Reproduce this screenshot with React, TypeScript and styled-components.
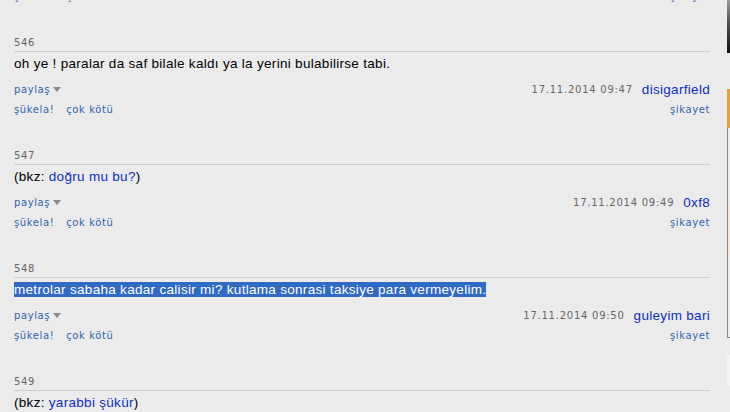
import * as React from 'react'
import styled, { createGlobalStyle } from 'styled-components'

const GlobalStyle = createGlobalStyle`
  html, body {
    margin: 0;
    padding: 0;
    background: #ebebeb;
    overflow: hidden;
  }
`

const colors = {
  bg: '#ebebeb',
  text: '#000',
  muted: '#666',
  rule: '#cdcdcd',
  link: '#0b2fc6',
  small: '#2f64b4',
  select: '#316ac5',
}

const Page = styled.div`
  display: flex;
  width: 730px;
  height: 412px;
  overflow: hidden;
  background: ${colors.bg};
`

const Main = styled.main`
  width: 696px;
  margin-left: 14px;
  flex: none;
`

const List = styled.ol`
  list-style: none;
  margin: -77px 0 0 0;
  padding: 0;
`

const Entry = styled.li`
  margin: 0 0 33px 0;
`

const Num = styled.div`
  font-family: 'DejaVu Sans', Verdana, sans-serif;
  font-size: 10px;
  line-height: 14px;
  letter-spacing: 0.6px;
  color: ${colors.muted};
  padding-bottom: 1px;
  border-bottom: 1px solid ${colors.rule};
`

const Content = styled.div`
  margin-top: 4px;
  font-family: 'Liberation Sans', Arial, sans-serif;
  font-size: 13.5px;
  letter-spacing: 0.3px;
  line-height: 16px;
  color: ${colors.text};
`

const Selected = styled.span`
  background: ${colors.select};
  color: #fff;
`

const Bkz = styled.a`
  color: ${colors.link};
  text-decoration: none;
`

const Row = styled.div<{ $top: number; $h: number }>`
  display: flex;
  align-items: center;
  justify-content: space-between;
  margin-top: ${(p) => p.$top}px;
  height: ${(p) => p.$h}px;
`

const Small = styled.a`
  font-family: 'DejaVu Sans', Verdana, sans-serif;
  font-size: 10px;
  letter-spacing: 0.6px;
  color: ${colors.small};
  text-decoration: none;
`

const Group = styled.div`
  display: flex;
  align-items: center;
  gap: 12px;
`

const Share = styled.span`
  display: inline-flex;
  align-items: center;
  gap: 3px;
`

const Caret = styled.span`
  width: 0;
  height: 0;
  border-left: 4px solid transparent;
  border-right: 4px solid transparent;
  border-top: 5px solid #8a8a8a;
  margin-top: 1px;
`

const Meta = styled.div`
  display: flex;
  align-items: center;
  gap: 9px;
`

const DateText = styled.span`
  font-family: 'DejaVu Sans', Verdana, sans-serif;
  font-size: 10px;
  letter-spacing: 0.75px;
  color: ${colors.muted};
`

const Author = styled.a`
  font-family: 'Liberation Sans', Arial, sans-serif;
  font-size: 13.5px;
  letter-spacing: 0.3px;
  color: ${colors.link};
  text-decoration: none;
`

const Side = styled.aside`
  margin-left: 17px;
  flex: 1;
  display: flex;
  flex-direction: column;
`

const SideImage = styled.div`
  height: 53px;
  background: linear-gradient(#9a9a9a, #555 40%, #111);
`

const SideBox = styled.div`
  margin-top: 36px;
  height: 248px;
  border-left: 1px solid #8a8a8a;
  border-bottom: 1px solid #8a8a8a;
  display: flex;
  flex-direction: column;
`

const Accent = styled.div`
  height: 39px;
  margin-left: -1px;
  border-left: 3px solid #f0a020;
`

const Cream = styled.div`
  margin-top: 78px;
  height: 49px;
  background: #f6e8c8;
`

const SideCard = styled.div`
  margin-top: 17px;
  height: 31px;
  background: #f4f4f4;
`

type Item = {
  id: number
  body: React.ReactNode
  date: string
  author: string
}

const items: Item[] = [
  { id: 545, body: 'gece yarisi', date: '17.11.2014 09:45', author: 'anonim' },
  {
    id: 546,
    body: 'oh ye ! paralar da saf bilale kaldı ya la yerini bulabilirse tabi.',
    date: '17.11.2014 09:47',
    author: 'disigarfield',
  },
  {
    id: 547,
    body: (
      <>
        (bkz: <Bkz href="#">doğru mu bu?</Bkz>)
      </>
    ),
    date: '17.11.2014 09:49',
    author: '0xf8',
  },
  {
    id: 548,
    body: <Selected>metrolar sabaha kadar calisir mi? kutlama sonrasi taksiye para vermeyelim.</Selected>,
    date: '17.11.2014 09:50',
    author: 'guleyim bari',
  },
  {
    id: 549,
    body: (
      <>
        (bkz: <Bkz href="#">yarabbi şükür</Bkz>)
      </>
    ),
    date: '17.11.2014 09:51',
    author: 'yorumcu',
  },
]

const App = () => {
  return (
    <Page>
      <GlobalStyle />
      <Main>
        <List>
          {items.map((it) => (
            <Entry key={it.id}>
              <Num>{it.id}</Num>
              <Content>{it.body}</Content>
              <Row $top={8} $h={18}>
                <Share>
                  <Small href="#">paylaş</Small>
                  <Caret />
                </Share>
                <Meta>
                  <DateText>{it.date}</DateText>
                  <Author href="#">{it.author}</Author>
                </Meta>
              </Row>
              <Row $top={4} $h={14}>
                <Group>
                  <Small href="#">şükela!</Small>
                  <Small href="#">çok kötü</Small>
                </Group>
                <Small href="#">şikayet</Small>
              </Row>
            </Entry>
          ))}
        </List>
      </Main>
      <Side>
        <SideImage />
        <SideBox>
          <Accent />
          <Cream />
        </SideBox>
        <SideCard />
      </Side>
    </Page>
  )
}

export default App
